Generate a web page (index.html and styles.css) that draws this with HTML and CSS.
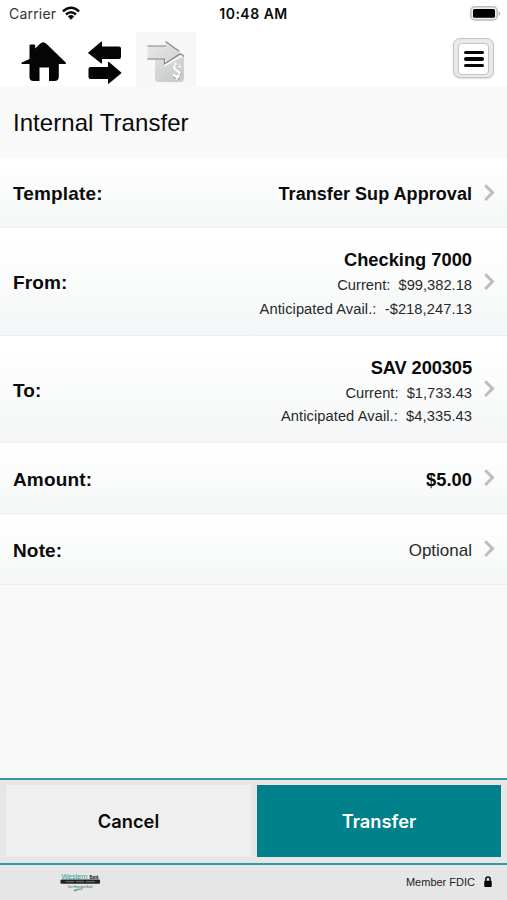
FILE: index.html
```html
<!DOCTYPE html>
<html lang="en">
<head>
<meta charset="utf-8">
<title>Internal Transfer</title>
<link rel="stylesheet" href="styles.css">
</head>
<body>
<div class="status">
  <div class="carrier"><span>Carrier</span>
    <svg width="18" height="14" viewBox="0 0 18 14"><g fill="none" stroke="#080808" stroke-width="2.4"><path d="M.9 5.3Q9-2 17.1 5.3"/><path d="M4 8.5q5-4.5 10 0"/></g><path d="M5.9 10.4q3.1-2.6 6.2 0L9 13.7z" fill="#080808"/></svg>
  </div>
  <div class="time">10:48 AM</div>
  <svg class="battery" width="31" height="15" viewBox="0 0 31 15"><rect x=".8" y=".8" width="26.4" height="13.2" rx="4" fill="#eee" stroke="#bdbdbd" stroke-width="1.5"/><rect x="3" y="3" width="22" height="8.8" rx="1.5"/><path d="M28.6 5v5q3-2.5 0-5" fill="#aaa"/></svg>
</div>
<nav class="tools">
  <svg class="home" width="46" height="42" viewBox="0 0 46 42"><path d="M8.500 18V4.700q0-1.200 1.200-1.200h3.300q1.200 0 1.200 1.200V7.500L19 2.800q3.200-3 6.400 0L44.700 21.500q1 1.200-.5 1.500H37.800V35.500q0 4.500-4.500 4.500H28V26.400H18.500V40H12.500q-4 0-4-4V23H1.200q-1.400-.3-.4-1.500Z" fill="#050505"/></svg>
  <svg class="swap" width="34" height="44" viewBox="0 0 34 44"><path d="M.6 11.300 13 .7q1-.8 1 .6V5.500H31q2 0 2 2V16q0 2-2 2H14v3.700q0 1.400-1 .5L.6 12.600q-.8-.7 0-1.300ZM2.500 26H20V21.500q0-1.400 1-.5L33 31.200q.8.700 0 1.300L21 42.500q-1 .8-1-.6V38H2.500q-2 0-2-2V28q0-2 2-2Z" fill="#050505"/></svg>
  <div class="tab">
    <svg width="60" height="54" viewBox="0 0 60 54"><defs><linearGradient id="g" x2=".7" y2="1"><stop stop-color="#e8e8e8"/><stop offset="1" stop-color="#c9cccc"/></linearGradient></defs><path d="M11.500 14H30V10.500L43 19.500L48 23V46q0 4-4 4H23q-4 0-4-4V27.500H11.500Z" fill="url(#g)"/><path d="M29 27.500V33L47.500 23.200" fill="none" stroke="#f6f6f6" stroke-width="2"/><path d="M11.500 14H30M29.500 9.500 43.200 19.200M11.500 27H28.500V32L37 26.500 42.500 22.800Q45 21 48 24.500" fill="none" stroke="#858585" stroke-width="1.200"/><path d="M44.500 35q-2.500-3-5-1.500-3 2.500.5 4.500l2.500 1.700q3 2.300 0 4.300-3 1.500-5.500-1.500M39.500 33v-2.500M40.500 44.500v3" fill="none" stroke="#fff" stroke-width="2"/><path d="M43.200 33.600q-2.500-1.500-4 .4M44.800 41q.6 2-1.300 3.500M37 44.500l3 2.200M42 48l2-2" fill="none" stroke="#909090" stroke-width=".8"/></svg>
  </div>
  <div class="menu"><div class="menu-in"><i></i><i></i><i></i></div></div>
</nav>
<h1>Internal Transfer</h1>
<main>
  <section class="row"><b class="label">Template:</b><div class="value"><b>Transfer Sup Approval</b></div><svg class="chev" viewBox="0 0 12 20"><path d="M2.200 2.300 9.500 9.500 2.200 17"/></svg></section>
  <section class="row tall"><b class="label">From:</b><div class="value"><b>Checking 7000</b><p>Current:&nbsp; $99,382.18</p><p class="wide">Anticipated Avail.:&nbsp; -$218,247.13</p></div><svg class="chev" viewBox="0 0 12 20"><path d="M2.200 2.300 9.500 9.500 2.200 17"/></svg></section>
  <section class="row tall"><b class="label">To:</b><div class="value"><b class="sav">SAV 200305</b><p>Current:&nbsp; $1,733.43</p><p class="wide">Anticipated Avail.:&nbsp; $4,335.43</p></div><svg class="chev" viewBox="0 0 12 20"><path d="M2.200 2.300 9.500 9.500 2.200 17"/></svg></section>
  <section class="row"><b class="label">Amount:</b><div class="value"><b class="amount">$5.00</b></div><svg class="chev" viewBox="0 0 12 20"><path d="M2.200 2.300 9.500 9.500 2.200 17"/></svg></section>
  <section class="row"><b class="label">Note:</b><div class="value"><span>Optional</span></div><svg class="chev" viewBox="0 0 12 20"><path d="M2.200 2.300 9.500 9.500 2.200 17"/></svg></section>
</main>
<div class="actions"><div class="btn cancel">Cancel</div><div class="btn transfer">Transfer</div></div>
<footer>
  <svg class="logo" width="42" height="22" viewBox="0 0 42 22"><text x="1.500" y="7" font-size="7.500" textLength="26" lengthAdjust="spacingAndGlyphs" fill="#27a49d">Western</text><text x="29.500" y="7" font-size="5" font-weight="bold" textLength="9" lengthAdjust="spacingAndGlyphs">Bank</text><rect x=".5" y="7.500" width="39.500" height="4.200" rx="1" fill="#202324"/><path d="M6 9.700h8M16 9.700h8M26 9.700h9" stroke="#777" stroke-width="1"/><text x="7.500" y="16" font-size="4" textLength="25" lengthAdjust="spacingAndGlyphs" fill="#555">Your Hometown Bank</text><path d="M14 18q5-1.500 9-1.200-5 .8-8.500 2.400Z" fill="#27a49d" stroke="#27a49d" stroke-width=".4"/></svg>
  <div class="fdic"><span>Member FDIC</span><svg width="8" height="12" viewBox="0 0 8 12"><path d="M1.900 5V3.200a2.100 2.100 0 0 1 4.200 0V5" fill="none" stroke="#050505" stroke-width="1.500"/><rect x=".3" y="4.700" width="7.400" height="6.300" rx=".8" fill="#050505"/></svg></div>
</footer>
</body>
</html>
```
FILE: styles.css
```css
* { box-sizing: border-box; }
body { margin: 0; width: 507px; height: 900px; overflow: hidden; display: flex; flex-direction: column; background: #f9f9f9; color: #0a0a0a; font-family: "Liberation Sans", Arial, sans-serif; }
svg { display: block; flex: none; }
p, h1 { margin: 0; font-weight: normal; }
.status { height: 28px; flex: none; display: grid; grid-template-columns: 1fr auto 1fr; background: #fff; font-family: Inter, sans-serif; line-height: 28px; }
.carrier { display: flex; gap: 6px; padding-left: 9px; font-size: 14px; letter-spacing: .2px; color: #333; }
.carrier svg { margin-top: 6px; }
.time { font-size: 14px; font-weight: 600; letter-spacing: .5px; }
.battery { justify-self: end; margin: 6px 6px 0 0; }
.tools { height: 58px; flex: none; display: flex; background: #fff; }
.home { margin: 13px 0 0 21px; }
.swap { margin: 13px 0 0 21px; }
.tab { width: 60px; height: 54px; margin: 4px 0 0 14px; background: #f7f7f7; }
.menu { width: 41px; height: 40px; margin: 10px 13px 0 auto; padding: 4px; border: 1px solid #c4c4c4; border-radius: 7px; background: #e9e9e9; box-shadow: 0 1px 2px #ddd; }
.menu-in { height: 32px; border: 1px solid #c4c4c4; border-radius: 4px; background: #fff; display: flex; flex-direction: column; align-items: center; justify-content: center; gap: 3px; }
.menu i { width: 20px; height: 3.500px; border-radius: 2px; background: #050505; }
h1 { height: 72px; flex: none; padding-left: 13px; font-size: 24px; letter-spacing: .05px; line-height: 74px; }
main { flex: 1; }
.row { height: 71px; display: flex; align-items: center; padding: 0 12px 0 13px; border-bottom: 1px solid #edefef; background: linear-gradient(#fff 10%, #fafbfb 50%, #f4f6f7); }
.row:first-child { height: 70px; }
.row.tall { height: 108px; }
.row.tall + .row.tall { height: 107px; }
.label { font-size: 19px; letter-spacing: .15px; line-height: 24px; padding-top: 3px; }
.row:first-child .label, .row:first-child .value, .row:nth-child(2) .label { padding-top: 2px; }
.value { margin-left: auto; text-align: right; padding-top: 3px; }
.value b { display: block; font-size: 18px; letter-spacing: .05px; line-height: 24px; }
.tall .value { padding-top: 3px; }
.tall .value b { font-size: 18.300px; letter-spacing: 0; line-height: 27px; }
.tall .value .sav { letter-spacing: -.1px; }
.value .amount { font-size: 18.300px; }
.value p { position: relative; top: 1px; font-size: 14.700px; line-height: 23.500px; color: #292929; }
.value .wide { letter-spacing: .06px; }
.value span { font-size: 17px; color: #292929; }
.chev { width: 12px; height: 20px; margin-left: 11px; }
.chev path { fill: none; stroke: #bdbdbd; stroke-width: 3; }
.actions { height: 87px; flex: none; display: grid; grid-template-columns: 245px 244px; gap: 6px; padding: 5px 6px 6px; background: #e6e6e6; border-top: 2px solid #3698a0; border-bottom: 2px solid #3698a0; }
.btn { display: flex; align-items: center; justify-content: center; font: 600 18.300px Inter, sans-serif; }
.cancel { background: #efefef; }
.transfer { background: #00808a; color: #fff; }
footer { height: 35px; flex: none; display: flex; justify-content: space-between; padding: 7px 15px 0 60px; background: #e6e6e6; }
.logo { overflow: visible; }
.fdic { display: flex; gap: 9px; font-size: 11px; line-height: 20px; color: #222; }
.fdic svg { margin-top: 4px; }
```
